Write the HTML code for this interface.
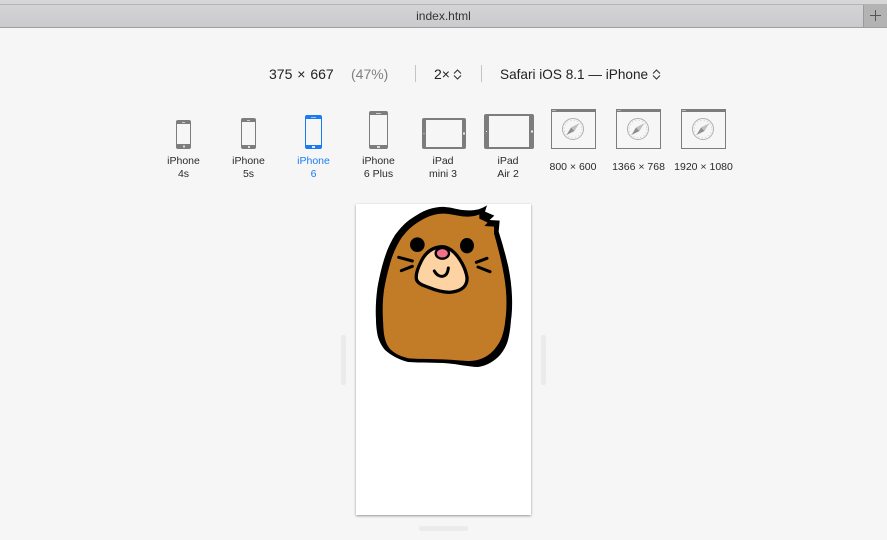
<!DOCTYPE html>
<html><head><meta charset="utf-8"><title>index.html</title>
<style>
html,body{margin:0;padding:0;background:#f6f6f6}
body{width:887px;height:540px;overflow:hidden;position:relative;font-family:"Liberation Sans",sans-serif}
svg{position:absolute;left:0;top:0}
text{font-family:"Liberation Sans",sans-serif}
.l{font-size:10.5px;fill:#2a2a2a;text-anchor:middle}
.b{font-size:10.5px;fill:#1a7cf5;text-anchor:middle}
.t{font-size:14px;fill:#222}
</style></head><body>
<svg width="887" height="540" viewBox="0 0 887 540" xmlns="http://www.w3.org/2000/svg">
<defs>
<linearGradient id="tab" x1="0" y1="0" x2="0" y2="1"><stop offset="0" stop-color="#d4d3d5"/><stop offset="1" stop-color="#cbcacc"/></linearGradient>
<filter id="sh" x="-10%" y="-10%" width="120%" height="120%"><feDropShadow dx="0" dy="1" stdDeviation="1.2" flood-color="#000" flood-opacity=".4"/></filter>
<g id="br">
<rect x=".5" y=".5" width="44" height="39" fill="none" stroke="#7d7d7d"/>
<rect x="0" y="0" width="45" height="3" fill="#7d7d7d"/>
<rect x="1" y="1" width="4" height="1" fill="#b5b5b5"/>
<circle cx="22" cy="20" r="10.5" fill="none" stroke="#b0b0b0" stroke-width="1"/>
<circle cx="22" cy="20" r="8.800" fill="none" stroke="#ccc" stroke-width="1" stroke-dasharray="1 2.500"/>
<path d="M28.500 14L23.500 22 20 18.500Z" fill="#c0c0c0"/>
<path d="M15.500 26L23.500 22 20 18.500Z" fill="#8e8e8e"/>
</g>
</defs>
<!-- title bar -->
<rect width="887" height="4" fill="#d6d5d7"/>
<rect y="4" width="887" height="1" fill="#b4b4b4"/>
<rect y="5" width="887" height="22" fill="url(#tab)"/>
<rect y="27" width="887" height="1" fill="#a0a0a0"/>
<rect x="863" y="5" width="24" height="22" fill="#b3b3b3"/>
<rect x="863" y="5" width="1" height="22" fill="#9a9a9a"/>
<path d="M875.500 10V21M870 15.500H881" stroke="#555" stroke-width="1" fill="none"/>
<text x="443.500" y="20" font-size="12" fill="#333" text-anchor="middle">index.html</text>
<!-- toolbar -->
<text class="t" x="269" y="79" word-spacing="1">375 × 667</text>
<text x="351" y="79" font-size="14" fill="#808080">(47%)</text>
<rect x="415" y="65" width="1" height="17" fill="#c4c4c4"/>
<text class="t" x="434" y="79">2×</text>
<path d="M454 73.500L457.500 70 461 73.500M454 75.500L457.500 79 461 75.500" fill="none" stroke="#333" stroke-width="1.100"/>
<rect x="481" y="65" width="1" height="17" fill="#c4c4c4"/>
<text class="t" x="500" y="79" style="font-size:13.6px">Safari iOS 8.1 — iPhone</text>
<path d="M653 73.500L656.500 70 660 73.500M653 75.500L656.500 79 660 75.500" fill="none" stroke="#333" stroke-width="1.100"/>
<!-- iPhone 4s -->
<rect x="176" y="120" width="15" height="29" rx="2" fill="#7d7d7d"/><rect x="177" y="124" width="13" height="20" fill="#f6f6f6"/><rect x="182" y="122" width="3" height="1" fill="#ccc"/><rect x="183" y="145.500" width="2" height="2" fill="#ddd"/>
<!-- 5s -->
<rect x="241" y="118" width="15" height="31" rx="2" fill="#7d7d7d"/><rect x="242" y="122" width="13" height="23" fill="#f6f6f6"/><rect x="247" y="120" width="3" height="1" fill="#ccc"/><rect x="248" y="146" width="2" height="2" fill="#ddd"/>
<!-- 6 -->
<rect x="305" y="115" width="17" height="34" rx="2" fill="#1a7cf5"/><rect x="306" y="119" width="15" height="26" fill="#f6f6f6"/><rect x="311" y="117" width="5" height="1" fill="#9cc6fa"/><rect x="312" y="146" width="3" height="2" fill="#dcebfd"/>
<!-- 6 Plus -->
<rect x="369" y="111" width="19" height="38" rx="2" fill="#7d7d7d"/><rect x="370" y="115" width="17" height="30" fill="#f6f6f6"/><rect x="376" y="113" width="5" height="1" fill="#ccc"/><rect x="377" y="146" width="3" height="2" fill="#ddd"/>
<!-- iPad mini -->
<rect x="422" y="118" width="44" height="31" rx="2" fill="#7d7d7d"/><rect x="426" y="120" width="36" height="27" fill="#f6f6f6"/><rect x="423" y="133" width="2" height="1" fill="#aaa"/><rect x="463" y="132.500" width="2" height="2" fill="#eee"/>
<!-- iPad Air -->
<rect x="484" y="114" width="50" height="35" rx="2" fill="#7d7d7d"/><rect x="489" y="116" width="40" height="31" fill="#f6f6f6"/><rect x="486" y="131" width="1" height="1" fill="#eee"/><rect x="531" y="130.500" width="2" height="2" fill="#eee"/>
<!-- browsers -->
<use href="#br" x="551" y="109"/><use href="#br" x="616" y="109"/><use href="#br" x="681" y="109"/>
<!-- labels -->
<text class="l" x="183.500" y="164">iPhone</text><text class="l" x="183.500" y="177">4s</text>
<text class="l" x="248.500" y="164">iPhone</text><text class="l" x="248.500" y="177">5s</text>
<text class="b" x="313.500" y="164">iPhone</text><text class="b" x="313.500" y="177">6</text>
<text class="l" x="378.500" y="164">iPhone</text><text class="l" x="378.500" y="177">6 Plus</text>
<text class="l" x="443" y="164">iPad</text><text class="l" x="443" y="177">mini 3</text>
<text class="l" x="508" y="164">iPad</text><text class="l" x="508" y="177">Air 2</text>
<text class="l" x="573" y="170">800 × 600</text>
<text class="l" x="638.500" y="170">1366 × 768</text>
<text class="l" x="703.500" y="170">1920 × 1080</text>
<!-- handles -->
<rect x="341" y="335" width="5" height="50" rx="2" fill="#ebebeb"/>
<rect x="541" y="335" width="5" height="50" rx="2" fill="#ebebeb"/>
<rect x="419" y="526" width="49" height="5" rx="2" fill="#ebebeb"/>
<!-- frame -->
<rect x="356" y="204" width="175" height="311" fill="#fff" filter="url(#sh)"/>
<!-- mole -->
<g transform="translate(365 200) scale(.33333)">
<path fill="#000" d="M366 16L360 35 388 47 374 60 404 62 401 95C412 130 422 165 430 200C436 230 440 260 441 290C442 315 441 340 438 360C436 385 434 400 429 420C424 438 416 452 405 465C390 482 365 498 339 501C310 500 275 492 249 490C210 487 170 489 129 486C105 480 80 468 60 450C50 438 43 425 39 411C35 395 33 375 33 360C31 330 33 295 37 265C42 235 50 200 60 170C68 145 78 125 90 105C105 85 120 68 140 55C155 45 172 34 190 28C208 23 225 20 240 21C258 22 275 28 292 30C310 32 328 31 340 28C350 25 358 21 366 16Z"/>
<path fill="#c27c28" d="M343 43L343 56 368 68 358 78 387 80 387 100C397 135 406 170 413 205C419 235 423 262 424 290C425 315 424 340 421 360C419 380 416 396 410 412C404 428 394 442 382 455C366 471 340 484 310 483C285 482 268 480 249 479C210 476 170 478 132 475C112 471 92 463 77 449C67 438 61 424 58 408C55 393 55 375 54 360C52 330 53 300 57 270C62 240 70 207 79 178C87 154 96 135 108 116C121 98 135 83 153 71C167 61 184 52 199 47C214 42 228 40 240 41C258 42 275 47 292 49C310 51 330 49 343 43Z"/>
<ellipse cx="157" cy="134" rx="22" ry="22" fill="#000"/>
<ellipse cx="306" cy="137" rx="21" ry="23" fill="#000"/>
<path d="M230 140C200 142 180 160 168 185C158 205 150 225 155 240C160 252 175 256 190 262C215 272 240 280 262 276C290 272 308 258 306 232C302 205 285 175 268 158C256 146 245 140 230 140Z" fill="#fdd3a4" stroke="#000" stroke-width="10" stroke-linejoin="round"/>
<ellipse cx="232" cy="160" rx="20" ry="16" fill="#f0708a" stroke="#000" stroke-width="7"/>
<path d="M208 213C214 224 225 232 236 228C246 225 249 214 250 204" fill="none" stroke="#000" stroke-width="9" stroke-linecap="round"/>
<path d="M101 172L142 183M109 212L142 199M334 187L366 175M339 201L375 215" fill="none" stroke="#000" stroke-width="9" stroke-linecap="round"/>
</g>
</svg>
</body></html>
